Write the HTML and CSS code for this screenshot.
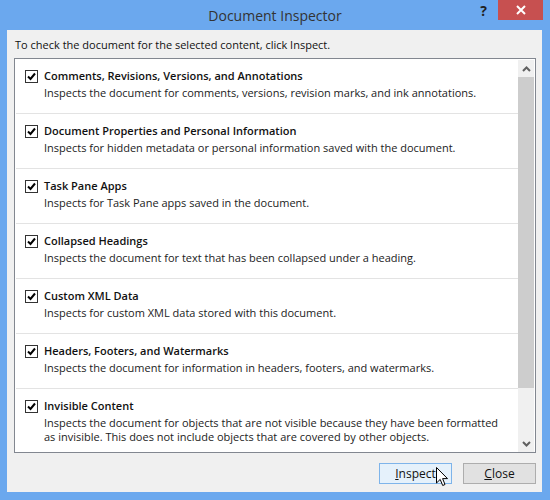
FILE: index.html
```html
<!DOCTYPE html>
<html lang="en">
<head>
    <meta charset="UTF-8">
    <title>Document Inspector</title>
    <link rel="stylesheet" href="styles.css">
</head>
<body>
    <div class="window">
        <div class="titlebar">
            <div></div>
            <div class="title">Document Inspector</div>
            <div class="caption-buttons">
                <span class="help">?</span>
                <span class="close-x">
                    <svg width="10" height="10" viewBox="0 0 10 10"><path d="M1 1 L9 9 M9 1 L1 9" stroke="#fff" stroke-width="2"/></svg>
                </span>
            </div>
        </div>
        <div class="client">
            <p class="intro">To check the document for the selected content, click Inspect.</p>
            <div class="listbox">
                <ul class="items">
                    <li class="item">
                        <span class="check"><svg width="11" height="11" viewBox="0 0 11 11"><path d="M2 5.5 L4.5 8 L9 2.5" fill="none" stroke="#000" stroke-width="2"/></svg></span>
                        <div class="text">
                            <div class="item-title">Comments, Revisions, Versions, and Annotations</div>
                            <div class="item-desc">Inspects the document for comments, versions, revision marks, and ink annotations.</div>
                        </div>
                    </li>
                    <li class="item">
                        <span class="check"><svg width="11" height="11" viewBox="0 0 11 11"><path d="M2 5.5 L4.5 8 L9 2.5" fill="none" stroke="#000" stroke-width="2"/></svg></span>
                        <div class="text">
                            <div class="item-title">Document Properties and Personal Information</div>
                            <div class="item-desc">Inspects for hidden metadata or personal information saved with the document.</div>
                        </div>
                    </li>
                    <li class="item">
                        <span class="check"><svg width="11" height="11" viewBox="0 0 11 11"><path d="M2 5.5 L4.5 8 L9 2.5" fill="none" stroke="#000" stroke-width="2"/></svg></span>
                        <div class="text">
                            <div class="item-title">Task Pane Apps</div>
                            <div class="item-desc">Inspects for Task Pane apps saved in the document.</div>
                        </div>
                    </li>
                    <li class="item">
                        <span class="check"><svg width="11" height="11" viewBox="0 0 11 11"><path d="M2 5.5 L4.5 8 L9 2.5" fill="none" stroke="#000" stroke-width="2"/></svg></span>
                        <div class="text">
                            <div class="item-title">Collapsed Headings</div>
                            <div class="item-desc">Inspects the document for text that has been collapsed under a heading.</div>
                        </div>
                    </li>
                    <li class="item">
                        <span class="check"><svg width="11" height="11" viewBox="0 0 11 11"><path d="M2 5.5 L4.5 8 L9 2.5" fill="none" stroke="#000" stroke-width="2"/></svg></span>
                        <div class="text">
                            <div class="item-title">Custom XML Data</div>
                            <div class="item-desc">Inspects for custom XML data stored with this document.</div>
                        </div>
                    </li>
                    <li class="item">
                        <span class="check"><svg width="11" height="11" viewBox="0 0 11 11"><path d="M2 5.5 L4.5 8 L9 2.5" fill="none" stroke="#000" stroke-width="2"/></svg></span>
                        <div class="text">
                            <div class="item-title">Headers, Footers, and Watermarks</div>
                            <div class="item-desc">Inspects the document for information in headers, footers, and watermarks.</div>
                        </div>
                    </li>
                    <li class="item">
                        <span class="check"><svg width="11" height="11" viewBox="0 0 11 11"><path d="M2 5.5 L4.5 8 L9 2.5" fill="none" stroke="#000" stroke-width="2"/></svg></span>
                        <div class="text">
                            <div class="item-title">Invisible Content</div>
                            <div class="item-desc">Inspects the document for objects that are not visible because they have been formatted<br>as invisible. This does not include objects that are covered by other objects.</div>
                        </div>
                    </li>
                </ul>
                <div class="scrollbar">
                    <div class="arrow"><svg width="9" height="6" viewBox="0 0 9 6"><path d="M1 5 L4.5 1.5 L8 5" fill="none" stroke="#606060" stroke-width="2"/></svg></div>
                    <div class="track"><div class="thumb"></div></div>
                    <div class="arrow"><svg width="9" height="6" viewBox="0 0 9 6"><path d="M1 1 L4.5 4.5 L8 1" fill="none" stroke="#606060" stroke-width="2"/></svg></div>
                </div>
            </div>
            <div class="buttons">
                <button class="btn hover"><u>I</u>nspect</button>
                <button class="btn"><u>C</u>lose</button>
            </div>
        </div>
        <!-- mouse pointer sitting over the Inspect button -->
        <svg class="cursor" width="13" height="20" viewBox="0 0 13 20"><path d="M0.5 0.5 L0.5 16 L4.2 12.4 L6.7 18.5 L9 17.5 L6.6 11.6 L11.5 11.6 Z" fill="#fff" stroke="#000" stroke-width="1"/></svg>
    </div>
</body>
</html>
```

FILE: styles.css
```css
body {
    margin: 0;
    font-family: "Open Sans", "Noto Sans", sans-serif;
}
.window {
    position: relative;
    width: 550px;
    height: 500px;
    background-color: #6ba8ee;
    display: flex;
    flex-direction: column;
}
.titlebar {
    height: 30px;
    display: grid;
    grid-template-columns: 1fr auto 1fr;
}
.title {
    font-size: 14px;
    line-height: 32px;
    color: #333;
}
.caption-buttons {
    display: flex;
    justify-content: flex-end;
    align-items: flex-start;
    padding-right: 7px;
}
.help {
    width: 25px;
    margin-right: 2px;
    text-align: center;
    font-weight: bold;
    font-size: 14px;
    line-height: 22px;
    color: #222;
}
.close-x {
    width: 45px;
    height: 20px;
    background-color: #c75050;
    display: flex;
    align-items: center;
    justify-content: center;
}
.client {
    flex: 1;
    margin: 0 8px 8px 7px;
    padding: 7px 6px 0 7px;
    background-color: #f0f0f0;
    display: flex;
    flex-direction: column;
}
.intro {
    margin: 0 0 5px 1px;
    font-size: 11px;
    line-height: 16px;
    color: #111;
}
.listbox {
    height: 393px;
    border: 1px solid #828790;
    background-color: #fff;
    display: flex;
}
.items {
    flex: 1;
    margin: 0;
    padding: 0;
    list-style: none;
    overflow: hidden;
}
.item {
    display: flex;
    align-items: flex-start;
    gap: 6px;
    padding: 10px 0 13px 9px;
    border-bottom: 1px solid #e3e3e3;
    margin-left: 1px;
}
.check {
    width: 11px;
    height: 11px;
    margin-top: 1px;
    border: 1px solid #333;
    background-color: #fff;
    display: flex;
}
.item-title {
    font-size: 11px;
    font-weight: 600;
    line-height: 14px;
    color: #111;
}
.item-desc {
    margin-top: 3px;
    font-size: 11px;
    line-height: 14px;
    color: #222;
}
.scrollbar {
    width: 16px;
    margin: 1px 1px 0 0;
    background-color: #f0f0f0;
    display: flex;
    flex-direction: column;
}
.arrow {
    height: 17px;
    display: flex;
    align-items: center;
    justify-content: center;
}
.track {
    flex: 1;
}
.thumb {
    height: 311px;
    background-color: #cdcdcd;
}
.buttons {
    display: flex;
    justify-content: flex-end;
    gap: 11px;
    margin-top: 10px;
}
.btn {
    width: 73px;
    height: 21px;
    padding: 0;
    font-family: inherit;
    font-size: 12px;
    color: #111;
    background-color: #e1e1e1;
    border: 1px solid #adadad;
}
.btn.hover {
    background-color: #e5f1fb;
    border-color: #7eb4ea;
}
.cursor {
    position: absolute;
    left: 436px;
    top: 467px;
}
```
